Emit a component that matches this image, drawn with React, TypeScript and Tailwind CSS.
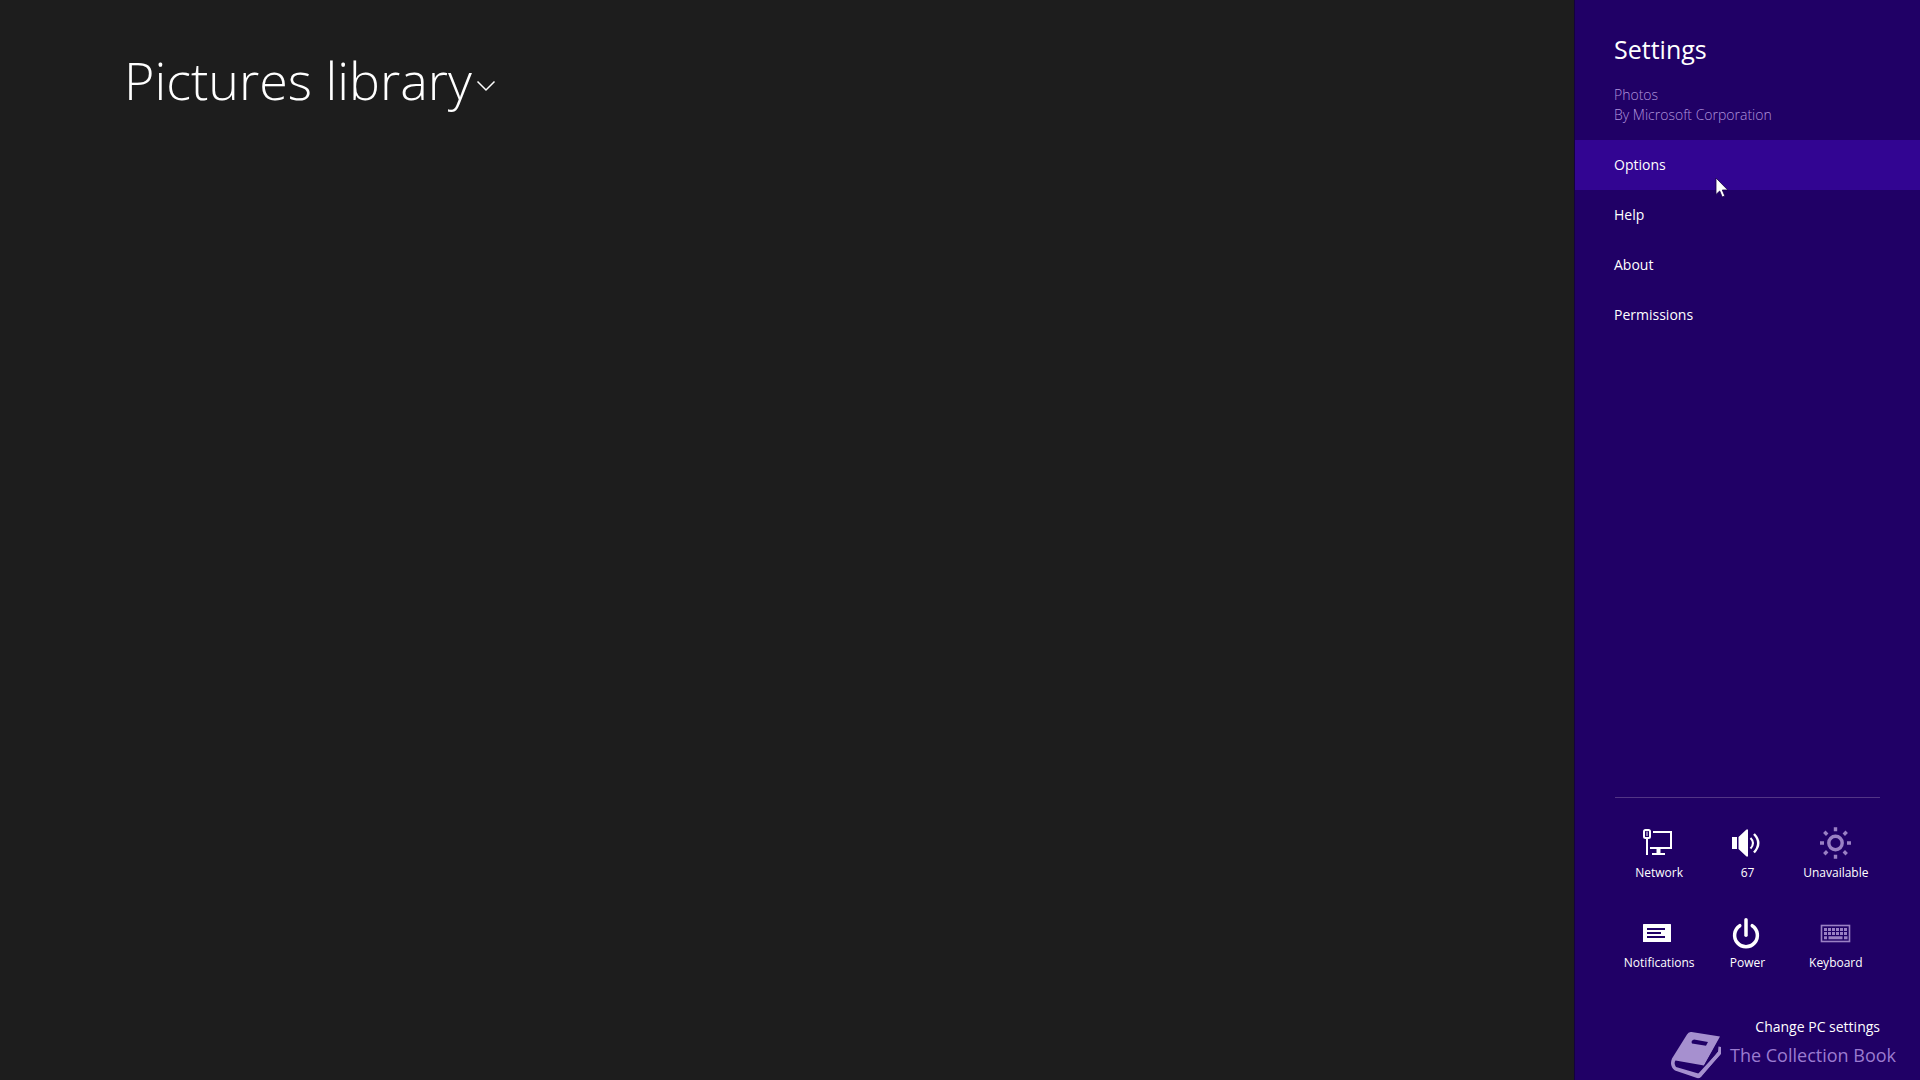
import type { ReactNode } from "react";

function NetworkIcon() {
  return (
    <svg className="size-8" viewBox="0 0 32 32" fill="none" stroke="white" aria-hidden="true">
      <path d="M10 5H28V21H7" strokeWidth="2" />
      <path d="M15.500 21V27" strokeWidth="4" />
      <path d="M9 27H22" strokeWidth="2" />
      <rect x="1" y="3" width="6" height="8" rx="1.500" strokeWidth="2" />
      <path d="M4 4.500V9" strokeWidth="1" />
      <path d="M4 11V28" strokeWidth="2" />
    </svg>
  );
}

function VolumeIcon() {
  return (
    <svg className="size-8" viewBox="0 0 32 32" fill="none" aria-hidden="true">
      <path d="M1 10H6V22H1ZM7.500 10L15.500 2.500H17V29.500H15.500L7.500 22Z" fill="white" />
      <path d="M19.500 11Q24.500 16 19.500 21.500" stroke="white" strokeWidth="2" />
      <path d="M23 7Q31.500 16 23 25.500" stroke="white" strokeWidth="2.400" />
    </svg>
  );
}

function BrightnessIcon() {
  return (
    <svg className="size-8" viewBox="0 0 32 32" fill="none" stroke="#9a80c4" strokeWidth="3.400" aria-hidden="true">
      <circle cx="15.500" cy="16" r="6.700" />
      <path d="M15.500 0.300V4.200M15.500 27.800V31.700M0 16H4M27 16H31M4.300 4.800L7.200 7.700M23.800 24.300L26.700 27.200M4.300 27.200L7.200 24.300M23.800 7.700L26.700 4.800" />
    </svg>
  );
}

function NotificationsIcon() {
  return (
    <svg className="size-8" viewBox="0 0 32 32" fill="none" aria-hidden="true">
      <rect x="0" y="7" width="28" height="18" rx="0.500" fill="white" />
      <path d="M4 12H22M4 16H18M4 20H22" stroke="#200066" strokeWidth="2" />
    </svg>
  );
}

function PowerIcon() {
  return (
    <svg className="size-8" viewBox="0 0 32 32" fill="none" stroke="white" strokeWidth="3.500" strokeLinecap="round" aria-hidden="true">
      <path d="M15 2.800V18.200" />
      <path d="M8.800 8.700A11.400 11.400 0 1 0 21.200 8.700" />
    </svg>
  );
}

function KeyboardIcon() {
  return (
    <svg className="size-8" viewBox="0 0 32 32" fill="none" stroke="#9a80c4" aria-hidden="true">
      <rect x="1.500" y="8.500" width="28" height="16" strokeWidth="1.600" />
      <path d="M4 12.500H28M4 16.500H28" strokeWidth="3" strokeDasharray="3 1" />
      <path d="M4 20.800H7M8.500 20.800H22.500M24 20.800H27.500" strokeWidth="3" />
    </svg>
  );
}

function BookIcon() {
  return (
    <svg className="h-12 w-13" viewBox="0 0 52 48" aria-hidden="true">
      <path
        d="M21.500 1L50 5.500L34 34.500L5.500 29.500Q3.500 32.500 6 36L30 43L49.500 18.500V24L31 46Q29.500 47.500 27 47L5 39.500Q-1 35 2 27.500L17 3.500Q18.500 0.500 21.500 1Z"
        fill="#a690cf"
      />
      <path d="M34 34.500L30 43L49.500 18.500L48.500 9.500Z" fill="#200066" />
      <path d="M48.500 15.500L51 16V23L29.500 47L27.500 43.500L48 21Z" fill="#a690cf" />
      <path d="M24 8.500L38 11L36 14.800L22 12.500Q20.500 9.500 24 8.500Z" fill="#200066" />
    </svg>
  );
}

function Cursor() {
  return (
    <svg className="pointer-events-none absolute top-[37px] left-[140px] h-5.5 w-3.5" viewBox="0 0 14 22" aria-hidden="true">
      <path d="M1 1V17.500L4.700 14L7.200 20L9.800 18.900L7.300 13H12.800Z" fill="white" stroke="#16004a" strokeWidth="0.800" />
    </svg>
  );
}

const links = ["Options", "Help", "About", "Permissions"];

const tiles: { label: string; icon: ReactNode; disabled?: boolean }[] = [
  { label: "Network", icon: <NetworkIcon /> },
  { label: "67", icon: <VolumeIcon /> },
  { label: "Unavailable", icon: <BrightnessIcon />, disabled: true },
  { label: "Notifications", icon: <NotificationsIcon /> },
  { label: "Power", icon: <PowerIcon /> },
  { label: "Keyboard", icon: <KeyboardIcon /> },
];

export default function App() {
  return (
    <div className="flex min-h-screen bg-[#1d1d1d] font-['Open_Sans','Noto_Sans',sans-serif] text-white">
      <main className="flex-1 px-[124px] pt-[42px]">
        <h1>
          <button className="flex items-center text-[52px] leading-[76px] font-light">
            Pictures library
            <svg className="mt-3 ml-1 h-3 w-5" viewBox="0 0 20 12" fill="none" stroke="white" strokeWidth="1.500" aria-hidden="true">
              <path d="M1.500 1.500L10 10L18.500 1.500" />
            </svg>
          </button>
        </h1>
      </main>

      <aside className="relative flex w-[346px] shrink-0 flex-col border-l border-[#14003f] bg-[#200066]">
        <header className="px-[39px] pt-[31px]">
          <h2 className="text-[25px] leading-9">Settings</h2>
          <div className="mt-[18px] mb-[15px] text-[14px] leading-5 font-light text-[#b094dd]">
            <p>Photos</p>
            <p>By Microsoft Corporation</p>
          </div>
        </header>

        <nav className="flex flex-col">
          {links.map((label) => (
            <button
              key={label}
              className={
                label === "Options"
                  ? "relative h-[50px] bg-[#320592] px-[39px] pb-0.5 text-left text-[14px]"
                  : "h-[50px] px-[39px] pb-0.5 text-left text-[14px]"
              }
            >
              {label}
              {label === "Options" && <Cursor />}
            </button>
          ))}
        </nav>

        <div className="mt-auto px-10">
          <div className="grid grid-cols-3 gap-y-5 border-t border-[#523586] pt-[29px]">
            {tiles.map((tile) => (
              <button key={tile.label} disabled={tile.disabled} className="flex h-[70px] flex-col items-center gap-1 text-[12px] leading-5">
                {tile.icon}
                {tile.label}
              </button>
            ))}
          </div>
          <div className="mt-[30px] mb-[43px] text-right text-[14px] leading-5">
            <a href="#pc-settings">Change PC settings</a>
          </div>
        </div>

        <div className="pointer-events-none absolute right-6 bottom-px flex items-center gap-2 text-[18px] leading-6 text-[#9b7bd0]">
          <BookIcon />
          The Collection Book
        </div>
      </aside>
    </div>
  );
}
